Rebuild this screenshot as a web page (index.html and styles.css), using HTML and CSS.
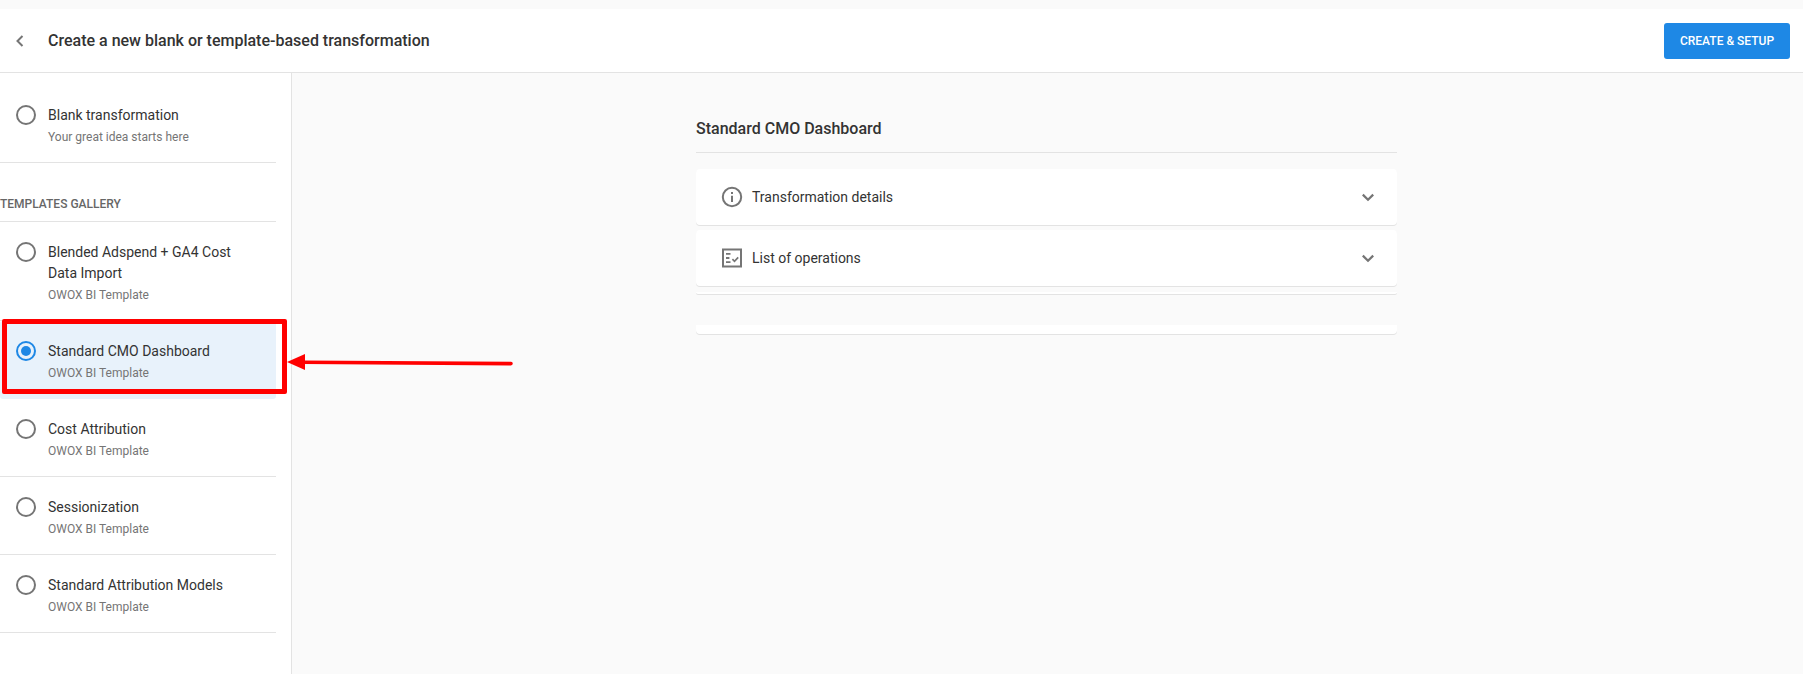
FILE: index.html
```html
<!DOCTYPE html>
<html lang="en">
<head>
<meta charset="utf-8">
<title>Create transformation</title>
<link rel="stylesheet" href="styles.css">
</head>
<body>
<div class="app">
  <header class="topbar">
    <svg class="back" width="24" height="24" viewBox="0 0 24 24"><path d="M14.5 7 9.5 12l5 5" fill="none" stroke="#757575" stroke-width="2"/></svg>
    <h1 class="page-title">Create a new blank or template-based transformation</h1>
    <button class="primary">CREATE &amp; SETUP</button>
  </header>
  <div class="body">
    <aside class="sidebar">
      <div class="item first">
        <span class="radio"></span>
        <div class="item-text"><div class="name">Blank transformation</div><div class="sub">Your great idea starts here</div></div>
      </div>
      <div class="gallery-label">TEMPLATES GALLERY</div>
      <div class="item">
        <span class="radio"></span>
        <div class="item-text"><div class="name">Blended Adspend + GA4 Cost<br>Data Import</div><div class="sub">OWOX BI Template</div></div>
      </div>
      <div class="item selected">
        <span class="radio on"></span>
        <div class="item-text"><div class="name">Standard CMO Dashboard</div><div class="sub">OWOX BI Template</div></div>
      </div>
      <div class="item">
        <span class="radio"></span>
        <div class="item-text"><div class="name">Cost Attribution</div><div class="sub">OWOX BI Template</div></div>
      </div>
      <div class="item">
        <span class="radio"></span>
        <div class="item-text"><div class="name">Sessionization</div><div class="sub">OWOX BI Template</div></div>
      </div>
      <div class="item">
        <span class="radio"></span>
        <div class="item-text"><div class="name">Standard Attribution Models</div><div class="sub">OWOX BI Template</div></div>
      </div>
    </aside>
    <main class="content">
      <section class="panel">
        <h2 class="panel-title">Standard CMO Dashboard</h2>
        <div class="card">
          <svg class="card-icon" width="24" height="24" viewBox="0 0 24 24"><circle cx="12" cy="12" r="9.2" fill="none" stroke="#757575" stroke-width="2"/><path d="M11 7h2v2h-2zM11 10.800h2V17h-2z" fill="#757575"/></svg>
          <span class="card-label">Transformation details</span>
          <svg class="chev" width="24" height="24" viewBox="0 0 24 24"><path d="M6.800 9.600 12 14.800 17.200 9.600" fill="none" stroke="#757575" stroke-width="2.200"/></svg>
        </div>
        <div class="card">
          <svg class="card-icon" width="24" height="24" viewBox="0 0 24 24"><rect x="3" y="3.500" width="18" height="17" fill="none" stroke="#757575" stroke-width="2"/><path d="M6 7h4.500v1.800H6zM6 11.100h3.400v1.800H6zM6 15.200h4.500V17H6z" fill="#757575"/><path d="m12.400 13.200 2.100 2.100 3.700-3.900" fill="none" stroke="#757575" stroke-width="1.700"/></svg>
          <span class="card-label">List of operations</span>
          <svg class="chev" width="24" height="24" viewBox="0 0 24 24"><path d="M6.800 9.600 12 14.800 17.200 9.600" fill="none" stroke="#757575" stroke-width="2.200"/></svg>
        </div>
        <div class="sliver"></div>
        <div class="tail"></div>
      </section>
    </main>
  </div>
  <div class="highlight"></div>
  <svg class="arrow" width="230" height="20" viewBox="0 0 230 20"><path d="M0 10 18 2v16z" fill="#ff0000"/><path d="M16 10.200 224 11.600" stroke="#ff0000" stroke-width="3.600" stroke-linecap="round"/></svg>
</div>
</body>
</html>
```

FILE: styles.css
```css
* { box-sizing: border-box; }
html, body { margin: 0; height: 100%; }
body {
  background: #fafafa;
  font-family: Roboto, "Liberation Sans", sans-serif;
  color: #333;
  overflow: hidden;
}
.app {
  position: relative;
  height: 674px;
  padding-top: 9px;
  display: flex;
  flex-direction: column;
}
.topbar {
  height: 64px;
  flex: none;
  display: flex;
  align-items: center;
  background: #fff;
  border-bottom: 1px solid #e3e3e3;
  padding: 0 13px 0 8px;
}
.back { flex: none; }
.page-title {
  margin: 0 0 0 16px;
  font-size: 16px;
  font-weight: 500;
  color: #333;
  flex: 1;
}
.primary {
  width: 126px;
  height: 36px;
  border: 0;
  border-radius: 3px;
  background: #1e88e5;
  color: #fff;
  font: 500 12px Roboto, sans-serif;
  padding: 0;
}
.body {
  flex: 1;
  display: flex;
  min-height: 0;
}
.sidebar {
  width: 292px;
  flex: none;
  background: #fff;
  border-right: 1px solid #e3e3e3;
  padding: 12px 15px 0 0;
}
.item {
  display: flex;
  align-items: flex-start;
  padding: 19px 16px 15px 16px;
  border-bottom: 1px solid #e3e3e3;
}
.item.selected {
  background: #e8f2fb;
  border-bottom: 0;
  border-radius: 3px;
  padding-bottom: 16px;
}
.radio {
  width: 20px;
  height: 20px;
  flex: none;
  border: 2px solid #757575;
  border-radius: 50%;
  margin: 1px 0 0;
  position: relative;
}
.radio.on {
  border-color: #1e88e5;
}
.radio.on::after {
  content: "";
  position: absolute;
  inset: 3px;
  border-radius: 50%;
  background: #1e88e5;
}
.item-text {
  margin-left: 12px;
  padding-top: 1px;
}
.name {
  font-size: 14px;
  line-height: 21px;
  color: #333;
}
.sub {
  font-size: 12px;
  line-height: 20px;
  color: #757575;
  margin-top: 1px;
}
.gallery-label {
  height: 59px;
  padding-top: 32px;
  font-size: 12px;
  line-height: 18px;
  font-weight: 500;
  color: #666;
  border-bottom: 1px solid #e3e3e3;
}
.content {
  flex: 1;
  padding: 0 0 0 404px;
}
.panel { width: 701px; }
.panel-title {
  margin: 0;
  height: 80px;
  padding-top: 46px;
  font-size: 16px;
  line-height: 20px;
  font-weight: 500;
  color: #333;
  border-bottom: 1px solid #e3e3e3;
}
.card {
  height: 56px;
  margin-top: 16px;
  display: flex;
  align-items: center;
  background: #fff;
  border-radius: 4px;
  box-shadow: 0 1px 0 #e3e3e3;
  padding: 0 17px 0 24px;
}
.card + .card { margin-top: 5px; }
.card-label {
  margin-left: 8px;
  font-size: 14px;
  color: #333;
  flex: 1;
}
.sliver {
  height: 2px;
  margin-top: 6px;
  background: #fff;
  border-radius: 0 0 4px 4px;
  box-shadow: 0 1px 0 #e3e3e3;
}
.tail {
  height: 9px;
  margin-top: 31px;
  background: #fff;
  border-radius: 0 0 4px 4px;
  box-shadow: 0 1px 0 #e3e3e3;
}
.highlight {
  position: absolute;
  left: 2px;
  top: 319px;
  width: 285px;
  height: 75px;
  border: 5px solid #ff0000;
  border-radius: 2px;
}
.arrow {
  position: absolute;
  left: 287px;
  top: 352px;
}
```
